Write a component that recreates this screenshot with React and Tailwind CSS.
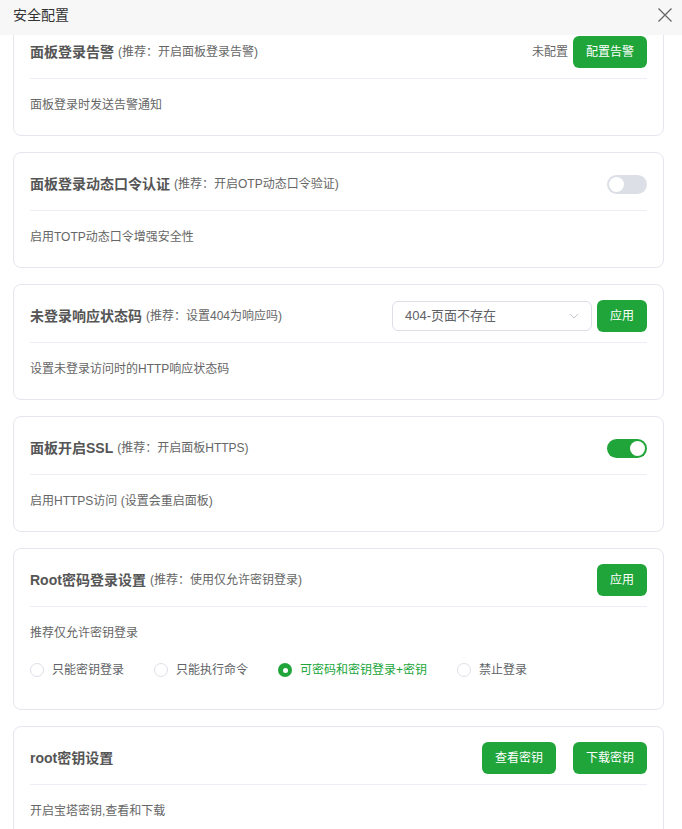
import React, { useState } from "react";

const font = { fontFamily: '"Liberation Sans", "Noto Sans CJK SC", sans-serif' };

const GreenButton = ({ children }) => (
  <button className="h-8 rounded-md bg-[#20a53a] px-[13px] text-[12px] leading-8 text-white">
    {children}
  </button>
);

const Toggle = ({ on }) => (
  <div
    className={`flex h-[19px] w-10 items-center rounded-full px-[2px] ${
      on ? "justify-end bg-[#20a53a]" : "justify-start bg-[#dcdfe6]"
    }`}
  >
    <div className="h-[15px] w-[15px] rounded-full bg-white" />
  </div>
);

// 各設定カード
const Card = ({ title, hint, desc, right, children }) => (
  <div className="rounded-lg border border-[#e4e7ed] bg-white px-4">
    <div className="border-b border-[#ebeef5] pb-[10px] pt-[15px]">
      <div className="flex h-8 items-center justify-between">
        <div className="flex items-center">
          <span className="text-[14px] font-bold text-[#555]">{title}</span>
          {hint && <span className="ml-1 text-[12px] text-[#666]">{hint}</span>}
        </div>
        <div className="flex items-center">{right}</div>
      </div>
    </div>
    <div className={children ? "pt-4 pb-[29px]" : "pt-4 pb-5"}>
      <p className="text-[12px] leading-5 text-[#666]">{desc}</p>
      {children}
    </div>
  </div>
);

const radios = ["只能密钥登录", "只能执行命令", "可密码和密钥登录+密钥", "禁止登录"];

export default function App() {
  const [rootMode, setRootMode] = useState(2);

  return (
    <div className="h-[829px] w-[682px] overflow-hidden bg-white" style={font}>
      <div className="flex h-[35px] items-start justify-between bg-[#f7f7f7] pl-[13px] pr-[7px] pt-[5px]">
        <span className="text-[14px] leading-5 text-[#333]">安全配置</span>
        <svg width="20" height="20" viewBox="0 0 20 20" className="text-[#666]">
          <path d="M3.5 3.5 L16.5 16.5 M16.5 3.5 L3.5 16.5" stroke="currentColor" strokeWidth="1.3" fill="none" />
        </svg>
      </div>

      <div className="h-[794px] overflow-hidden pl-[13px] pr-[18px]">
        <div className="-mt-[15px] flex flex-col gap-4">
          <Card
            title="面板登录告警"
            hint="(推荐：开启面板登录告警)"
            desc="面板登录时发送告警通知"
            right={
              <>
                <span className="mr-[5px] text-[12px] text-[#666]">未配置</span>
                <GreenButton>配置告警</GreenButton>
              </>
            }
          />
          <Card
            title="面板登录动态口令认证"
            hint="(推荐：开启OTP动态口令验证)"
            desc="启用TOTP动态口令增强安全性"
            right={<Toggle on={false} />}
          />
          <Card
            title="未登录响应状态码"
            hint="(推荐：设置404为响应吗)"
            desc="设置未登录访问时的HTTP响应状态码"
            right={
              <>
                <div className="mr-[5px] flex h-[30px] w-[200px] items-center justify-between rounded-md border border-[#dcdfe6] pl-3 pr-3">
                  <span className="text-[13px] text-[#606266]">404-页面不存在</span>
                  <svg width="10" height="6" viewBox="0 0 10 6">
                    <path d="M1 1 L5 5 L9 1" stroke="#c0c4cc" strokeWidth="1" fill="none" />
                  </svg>
                </div>
                <GreenButton>应用</GreenButton>
              </>
            }
          />
          <Card
            title="面板开启SSL"
            hint="(推荐：开启面板HTTPS)"
            desc="启用HTTPS访问 (设置会重启面板)"
            right={<Toggle on={true} />}
          />
          <Card
            title="Root密码登录设置"
            hint="(推荐：使用仅允许密钥登录)"
            desc="推荐仅允许密钥登录"
            right={<GreenButton>应用</GreenButton>}
          >
            <div className="mt-[17px] flex h-5 items-center">
              {radios.map((r, i) => (
                <label
                  key={r}
                  className="mr-[30px] flex cursor-pointer items-center"
                  onClick={() => setRootMode(i)}
                >
                  {rootMode === i ? (
                    <span className="flex h-[14px] w-[14px] items-center justify-center rounded-full bg-[#20a53a]">
                      <span className="h-[5px] w-[5px] rounded-full bg-white" />
                    </span>
                  ) : (
                    <span className="h-[14px] w-[14px] rounded-full border border-[#dcdfe6] bg-white" />
                  )}
                  <span
                    className={`ml-2 text-[12px] ${
                      rootMode === i ? "text-[#20a53a]" : "text-[#606266]"
                    }`}
                  >
                    {r}
                  </span>
                </label>
              ))}
            </div>
          </Card>
          <Card
            title="root密钥设置"
            desc="开启宝塔密钥,查看和下载"
            right={
              <div className="flex gap-[17px]">
                <GreenButton>查看密钥</GreenButton>
                <GreenButton>下载密钥</GreenButton>
              </div>
            }
          />
        </div>
      </div>
    </div>
  );
}
